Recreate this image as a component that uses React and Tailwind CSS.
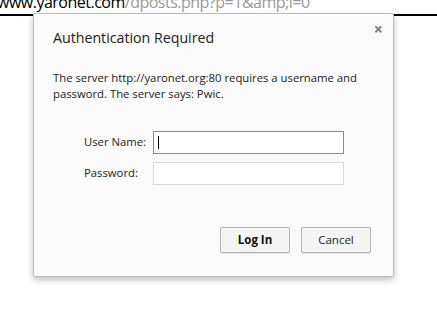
import React from "react";

export default function App() {
  return (
    <div className="relative h-[322px] w-[437px] overflow-hidden bg-white font-['Open_Sans',sans-serif]">
      <div className="-mt-[8px] ml-[-3px] whitespace-nowrap text-[16px] leading-[21px] tracking-[-0.5px]">
        <span className="text-black">www.yaronet.com</span>
        <span className="text-[#999]">/dposts.php?p=1&amp;amp;l=0</span>
      </div>
      <div className="mt-[1px] h-[2px] w-full bg-black"></div>

      <div className="absolute left-[33px] top-[13px] flex h-[264px] w-[361px] flex-col rounded-[2px] border border-[#bdbdbd] bg-[#fafafa] shadow-[0_3px_6px_rgba(0,0,0,0.25)]">
        <div className="flex items-start justify-between pl-[19px] pr-[10px] pt-[14px]">
          <h1 className="text-[14.2px] leading-[20px] text-[#222]">Authentication Required</h1>
          <span className="-mt-[7px] text-[16px] font-bold leading-[16px] text-[#7a7a7a]">×</span>
        </div>
        <p className="mt-[22px] px-[19px] text-[11.3px] leading-[16px] text-[#222]">
          The server http://yaronet.org:80 requires a username and password. The server says: Pwic.
        </p>
        <div className="mt-[29px] flex flex-col gap-[8px] pl-[50px]">
          <div className="flex items-center">
            <label className="w-[69px] text-[11.3px] text-[#222]">User Name:</label>
            <div className="flex h-[23px] w-[191px] items-center border border-[#4d90fe] bg-white pl-[4px]">
              <div className="h-[13px] w-px bg-black"></div>
            </div>
          </div>
          <div className="flex items-center">
            <label className="w-[69px] text-[11.3px] text-[#222]">Password:</label>
            <div className="h-[23px] w-[191px] border border-[#d9d9d9] bg-white"></div>
          </div>
        </div>
        <div className="mt-auto flex justify-end gap-[11px] pb-[23px] pr-[22px]">
          <button className="h-[26px] w-[70px] rounded-[2px] border border-[#b3b3b3] bg-[#f4f4f4] text-[11.5px] font-bold text-[#111] shadow-[0_1px_0_rgba(0,0,0,0.08)]">
            Log In
          </button>
          <button className="h-[26px] w-[70px] rounded-[2px] border border-[#b3b3b3] bg-[#f4f4f4] text-[11.5px] text-[#222] shadow-[0_1px_0_rgba(0,0,0,0.08)]">
            Cancel
          </button>
        </div>
      </div>
    </div>
  );
}
